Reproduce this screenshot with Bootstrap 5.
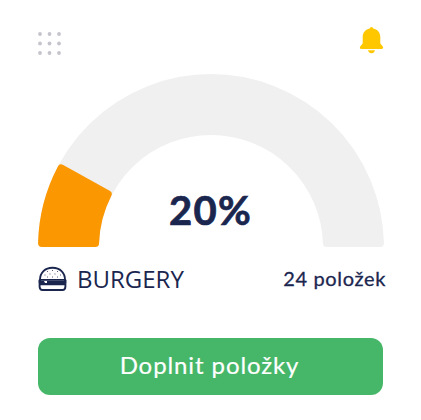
<!DOCTYPE html>
<html lang="cs">
<head>
  <meta charset="UTF-8">
  <meta name="viewport" content="width=device-width, initial-scale=1">
  <title>Burgery</title>
  <link href="https://cdn.jsdelivr.net/npm/bootstrap@5.3.3/dist/css/bootstrap.min.css" rel="stylesheet">
  <style>
    body { font-family: Lato, "Open Sans", sans-serif; color: #1b264f; background: #fff; }
    .stock { width: 421px; height: 420px; padding: 26px 38px 25px; overflow: hidden; }
    .stock-top { height: 48px; }
    .dots { margin-top: 5px; }
    .bell { margin-right: -1px; }
    .gauge { width: 346px; height: 173px; }
    .gauge-value { left: 0; right: 1px; bottom: 12px; font-size: 40px; line-height: 50px; font-weight: 700; letter-spacing: 1.3px; -webkit-text-stroke: .7px #1b264f; }
    .stock-info { height: 64px; margin-right: -3px; }
    .category { font-family: "Open Sans", sans-serif; font-size: 24px; line-height: 30px; letter-spacing: 0; margin-left: 10px; }
    .amount { font-size: 20px; line-height: 30px; letter-spacing: .65px; padding-bottom: 2px; -webkit-text-stroke: .3px #1b264f; }
    .btn-fill { width: 345px; height: 57px; margin-top: 27px; padding: 0 2px 3px 0; background: #46b768; color: #fff; border: 0; border-radius: 12px; font-size: 24px; letter-spacing: .9px; -webkit-text-stroke: .2px #fff; }
    .btn-fill:hover { background: #3da45c; color: #fff; }
  </style>
</head>
<body>
  <div class="stock d-flex flex-column">
    <div class="stock-top d-flex justify-content-between align-items-start">
      <svg class="dots" width="24" height="24" fill="#c5c4cd">
        <circle cx="2" cy="3" r="1.900"/><circle cx="11.5" cy="3" r="1.900"/><circle cx="21" cy="3" r="1.900"/>
        <circle cx="2" cy="12.5" r="1.900"/><circle cx="11.5" cy="12.5" r="1.900"/><circle cx="21" cy="12.5" r="1.900"/>
        <circle cx="2" cy="22" r="1.900"/><circle cx="11.5" cy="22" r="1.900"/><circle cx="21" cy="22" r="1.900"/>
      </svg>
      <svg class="bell" width="25" height="28" fill="#ffc700">
        <path d="M10.700 2.500Q11 1 12.500 1T14.300 2.500C19 3.500 21.300 7 21.300 11V17.500L23.600 20.200C24.700 21.600 24 23 22.400 23H2.600C1 23 .3 21.600 1.400 20.200L3.700 17.500V11C3.700 7 6 3.500 10.700 2.500Z"/>
        <path d="M9 24.200H16Q15.300 27.200 12.500 27.200T9 24.200Z"/>
      </svg>
    </div>

    <div class="gauge position-relative">
      <!-- the stroke rounds the corners of both segments -->
      <svg class="d-block" width="346" height="173" stroke-width="8" stroke-linejoin="round">
        <path d="M4.050 169A169 169 0 0 1 341.950 169H288.930A116 116 0 0 0 57.070 169Z" fill="#f0f0f0" stroke="#f0f0f0"/>
        <path d="M4.050 169A169 169 0 0 1 23.300 94.500L69.700 120.300A116 116 0 0 0 57.070 169Z" fill="#fb9700" stroke="#fb9700"/>
      </svg>
      <div class="gauge-value position-absolute text-center">20%</div>
    </div>

    <div class="stock-info d-flex justify-content-between align-items-center">
      <div class="d-flex align-items-center">
        <svg width="29" height="26" fill="none" stroke="#1b264f" stroke-width="1.900">
          <path d="M2 14C2 6.500 7 1.800 14.500 1.800S27 6.500 27 14Z" fill="#fff"/>
          <path d="M9 5.500h1M14 4.500h1M19 5.500h1M22 9h1M11.500 8h1M16.500 8h1M6.500 9h1M9 11h1M14 11h1M19 11h1" stroke="#59617e" stroke-width="1"/>
          <rect x=".5" y="13" width="28" height="5" rx="1.500" fill="#1b264f" stroke="none"/>
          <path d="M3 14.500H26" stroke="#7f89a5" stroke-width=".4"/>
          <path d="M6 15h3v2h-2z" fill="#fff" stroke="none"/>
          <path d="M1.600 18.300H27.400V20.500Q27.400 24 24.500 24H4.500Q1.600 24 1.600 20.500Z" fill="#fff"/>
        </svg>
        <span class="category">BURGERY</span>
      </div>
      <span class="amount">24 položek</span>
    </div>

    <button type="button" class="btn btn-fill">Doplnit položky</button>
  </div>

  <script src="https://cdn.jsdelivr.net/npm/bootstrap@5.3.3/dist/js/bootstrap.bundle.min.js"></script>
</body>
</html>
